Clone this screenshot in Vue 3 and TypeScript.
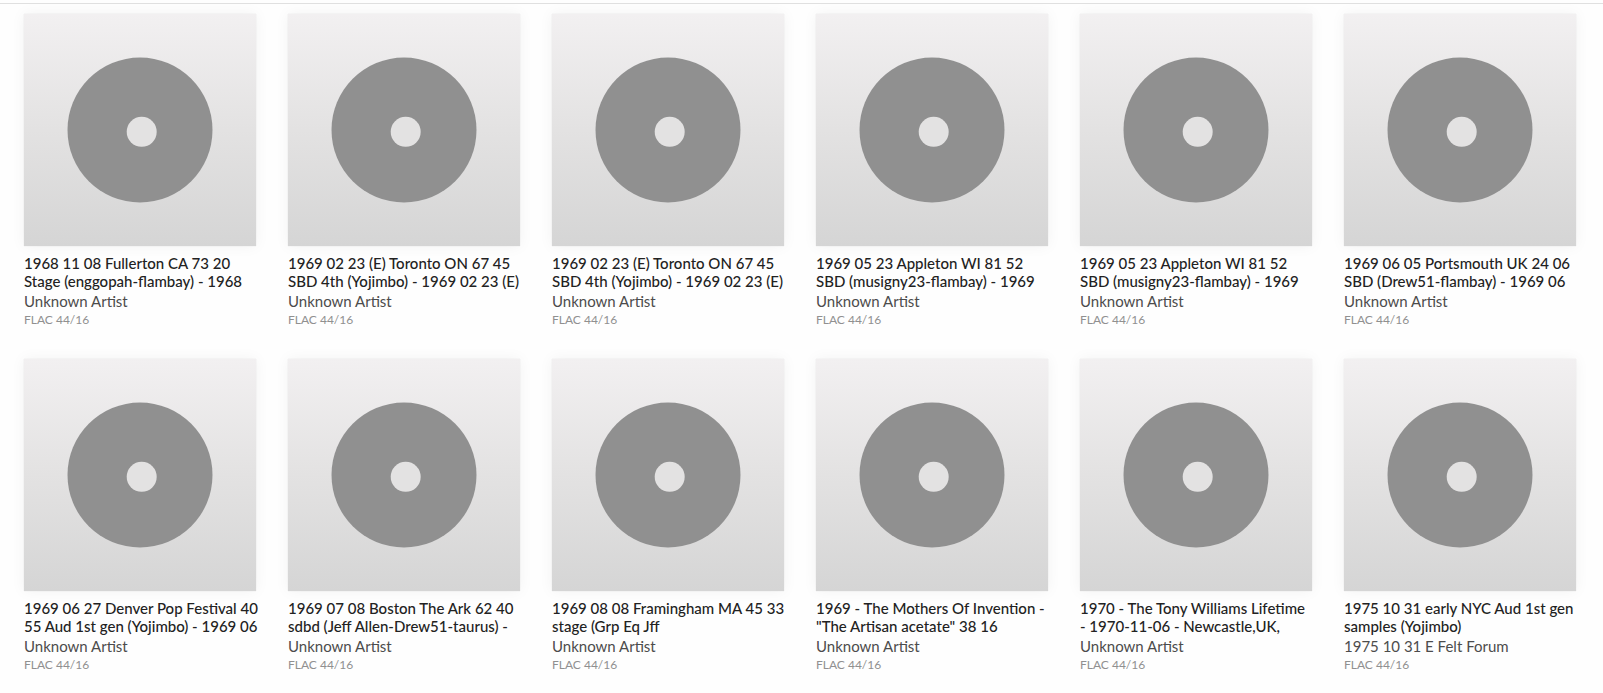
<script setup lang="ts">
interface Album { title: string[]; artist: string; format: string }

const make = (first: string, second: string, artist = 'Unknown Artist'): Album => ({
  title: [first, second], artist, format: 'FLAC 44/16',
})

const albums: Album[] = [
  make('1968 11 08 Fullerton CA 73 20', 'Stage (enggopah-flambay) - 1968'),
  make('1969 02 23 (E) Toronto ON 67 45', 'SBD 4th (Yojimbo) - 1969 02 23 (E)'),
  make('1969 02 23 (E) Toronto ON 67 45', 'SBD 4th (Yojimbo) - 1969 02 23 (E)'),
  make('1969 05 23 Appleton WI 81 52', 'SBD (musigny23-flambay) - 1969'),
  make('1969 05 23 Appleton WI 81 52', 'SBD (musigny23-flambay) - 1969'),
  make('1969 06 05 Portsmouth UK 24 06', 'SBD (Drew51-flambay) - 1969 06'),
  make('1969 06 27 Denver Pop Festival 40', '55 Aud 1st gen (Yojimbo) - 1969 06'),
  make('1969 07 08 Boston The Ark 62 40', 'sdbd (Jeff Allen-Drew51-taurus) -'),
  make('1969 08 08 Framingham MA 45 33', 'stage (Grp Eq Jff'),
  make('1969 - The Mothers Of Invention -', '"The Artisan acetate" 38 16'),
  make('1970 - The Tony Williams Lifetime', '- 1970-11-06 - Newcastle,UK,'),
  make('1975 10 31 early NYC Aud 1st gen', 'samples (Yojimbo)', '1975 10 31 E Felt Forum'),
]
</script>

<template>
  <main class="library">
    <article v-for="(album, i) in albums" :key="i" class="album">
      <div class="cover">
        <svg viewBox="0 0 232 232" aria-hidden="true">
          <circle cx="116" cy="116" r="72.500" fill="#909090" />
          <circle cx="117.700" cy="117.800" r="15" fill="#e3e2e2" />
        </svg>
      </div>
      <h2 class="title"><span v-for="line in album.title" :key="line">{{ line }}</span></h2>
      <p class="artist">{{ album.artist }}</p>
      <p class="format">{{ album.format }}</p>
    </article>
  </main>
</template>

<style>
body { background: #fefefe; }
</style>

<style scoped>
.library {
  display: grid;
  grid-template-columns: repeat(6, minmax(0, 1fr));
  column-gap: 32px;
  row-gap: 30px;
  margin-top: 3px;
  padding: 10px 27px 0 24px;
  border-top: 1px solid #e0e0e0;
  font-family: Lato, "Liberation Sans", sans-serif;
}
.cover {
  aspect-ratio: 1;
  background: linear-gradient(#f2f0f1, #e3e2e2 50%, #d5d5d5);
  box-shadow: 0 0 14px rgba(0, 0, 0, 0.05), 0 0 1px rgba(0, 0, 0, 0.12);
}
.cover svg { display: block; width: 100%; }
.title {
  margin: 8px 0 0;
  font-size: 15px;
  line-height: 18px;
  font-weight: 500;
  color: #222;
  white-space: nowrap;
}
.title span { display: block; }
.artist {
  margin: 2px 0 0;
  font-size: 15px;
  line-height: 19px;
  font-weight: 400;
  color: #4c4c4c;
}
.format {
  margin: 0;
  font-size: 12px;
  line-height: 18px;
  color: #909090;
}
</style>
